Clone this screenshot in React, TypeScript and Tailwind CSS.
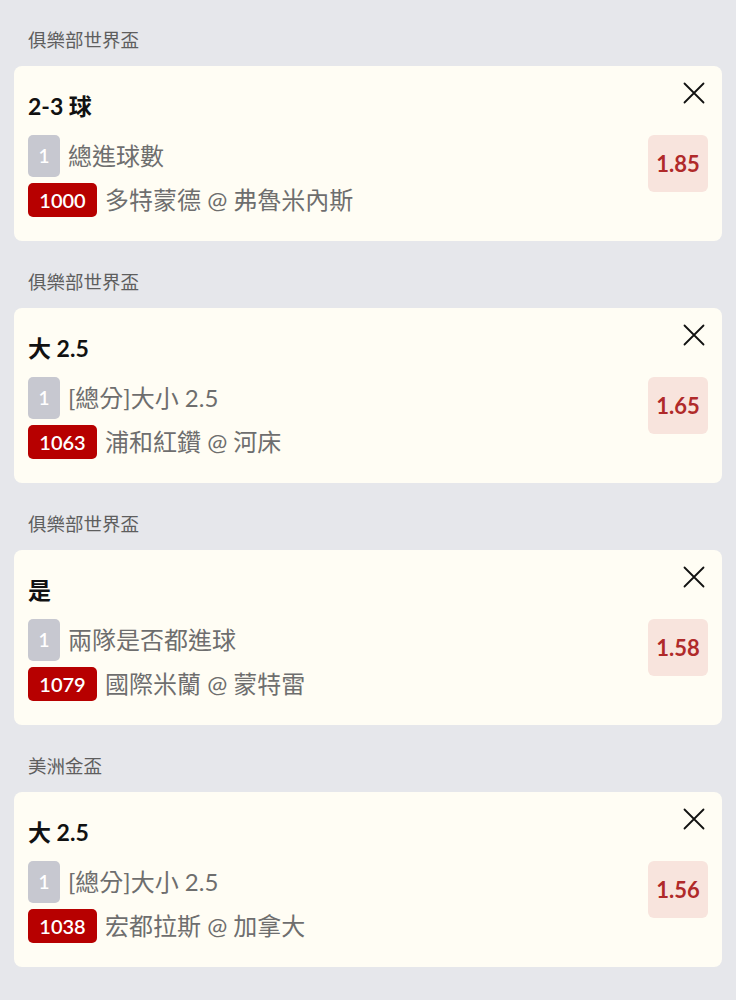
import React from "react";

type Bet = {
  league: string;
  title: string;
  market: string;
  code: string;
  match: string;
  odds: string;
};

const bets: Bet[] = [
  { league: "俱樂部世界盃", title: "2-3 球", market: "總進球數", code: "1000", match: "多特蒙德 @ 弗魯米內斯", odds: "1.85" },
  { league: "俱樂部世界盃", title: "大 2.5", market: "[總分]大小 2.5", code: "1063", match: "浦和紅鑽 @ 河床", odds: "1.65" },
  { league: "俱樂部世界盃", title: "是", market: "兩隊是否都進球", code: "1079", match: "國際米蘭 @ 蒙特雷", odds: "1.58" },
  { league: "美洲金盃", title: "大 2.5", market: "[總分]大小 2.5", code: "1038", match: "宏都拉斯 @ 加拿大", odds: "1.56" },
];

function CloseIcon() {
  return (
    <svg width="22" height="22" viewBox="0 0 22 22" fill="none">
      <path d="M1.5 1.5 L20.5 20.5 M20.5 1.5 L1.5 20.5" stroke="#111" strokeWidth="1.8" strokeLinecap="round" />
    </svg>
  );
}

function Card({ bet }: { bet: Bet }) {
  return (
    <div>
      <div className="pl-[28px] h-[24px] leading-[24px] text-[18.5px] text-[#5e5e5e]">{bet.league}</div>
      <div className="relative mt-[14px] mx-[14px] rounded-[8px] bg-[#fffdf4] px-[14px] pt-[24px] pb-[24px]">
        <button className="absolute right-[17px] top-[16px] w-[22px] h-[22px] flex items-center justify-center">
          <CloseIcon />
        </button>
        <div className="h-[32px] leading-[32px] text-[23px] font-bold text-[#111]">{bet.title}</div>
        <div className="mt-[13px] flex items-start">
          <div className="flex-1 flex flex-col gap-[6px]">
            <div className="flex items-center gap-[8px] h-[42px]">
              <div className="w-[32px] h-[42px] rounded-[5px] bg-[#c7c8d0] text-white text-[19px] font-semibold flex items-center justify-center">1</div>
              <div className="text-[24px] text-[#6e6e6e] leading-[42px]">{bet.market}</div>
            </div>
            <div className="flex items-center gap-[8px] h-[34px]">
              <div className="h-[34px] w-[69px] rounded-[5px] bg-[#b70000] text-white text-[20px] font-semibold flex items-center justify-center">{bet.code}</div>
              <div className="text-[24px] text-[#6e6e6e] leading-[34px]">{bet.match}</div>
            </div>
          </div>
          <div className="w-[60px] h-[57px] rounded-[6px] bg-[#f8e4dd] flex items-center justify-center text-[22px] font-bold text-[#b02a2a]">
            {bet.odds}
          </div>
        </div>
      </div>
    </div>
  );
}

export default function App() {
  return (
    <div
      className="min-h-[1000px] w-[736px] bg-[#e6e7eb] pt-[28px] flex flex-col gap-[29px]"
      style={{ fontFamily: 'Lato, "Noto Sans CJK TC", sans-serif' }}
    >
      {bets.map((b, i) => (
        <Card key={i} bet={b} />
      ))}
    </div>
  );
}
